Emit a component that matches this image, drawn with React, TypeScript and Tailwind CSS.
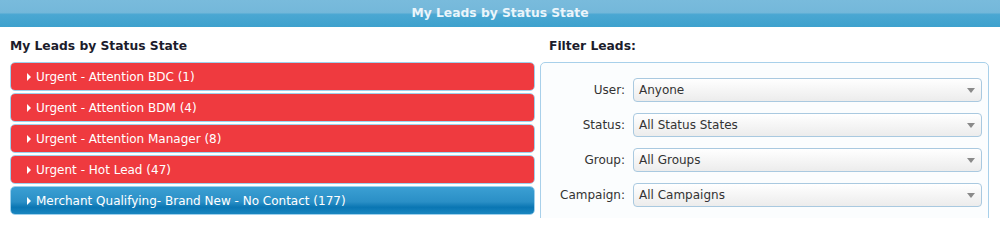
import { useState } from "react";

type Lead = { label: string; count: number; tone: "red" | "blue" };

const leads: Lead[] = [
  { label: "Urgent - Attention BDC", count: 1, tone: "red" },
  { label: "Urgent - Attention BDM", count: 4, tone: "red" },
  { label: "Urgent - Attention Manager", count: 8, tone: "red" },
  { label: "Urgent - Hot Lead", count: 47, tone: "red" },
  { label: "Merchant Qualifying- Brand New - No Contact", count: 177, tone: "blue" },
];

const filters = [
  { label: "User:", value: "Anyone" },
  { label: "Status:", value: "All Status States" },
  { label: "Group:", value: "All Groups" },
  { label: "Campaign:", value: "All Campaigns" },
];

function LeadRow({ lead }: { lead: Lead }) {
  const tone =
    lead.tone === "red"
      ? "bg-[#ef3a3f]"
      : "bg-[linear-gradient(#3b9fd3_0%,#2a8fc6_55%,#0a76b3_75%,#1a86c0_100%)]";
  return (
    <div className="rounded-[5px] border border-[#9fd0ec]">
      <button
        className={`flex h-[27px] w-full items-center gap-[5px] rounded-[4px] pl-[16px] text-left text-[12px] text-white ${tone}`}
      >
        <span className="h-0 w-0 border-y-[4px] border-l-[4px] border-y-transparent border-l-white" />
        <span>
          {lead.label} ({lead.count})
        </span>
      </button>
    </div>
  );
}

export default function App() {
  const [values] = useState(filters);

  return (
    <div className="h-[218px] w-[1000px] overflow-hidden bg-white font-['DejaVu_Sans',Verdana,sans-serif]">
      <div className="flex h-[27px] items-center justify-center bg-[linear-gradient(#79bbdc_0%,#74b8da_46%,#4aa7d2_54%,#3ea1cd_100%)]">
        <h1 className="text-[12.3px] font-bold text-[#eaf5fb]">My Leads by Status State</h1>
      </div>

      <div className="flex gap-[5px] px-[10px]">
        <section className="w-[525px] shrink-0">
          <h2 className="mt-[10px] mb-[6px] text-[12.3px] leading-[19px] font-bold text-[#1c1c2c]">
            My Leads by Status State
          </h2>
          <div className="flex flex-col gap-[2px]">
            {leads.map((l) => (
              <LeadRow key={l.label} lead={l} />
            ))}
          </div>
        </section>

        <section className="flex-1">
          <h2 className="mt-[10px] mb-[6px] pl-[9px] text-[12.3px] leading-[19px] font-bold text-[#1c1c2c]">
            Filter Leads:
          </h2>
          <div className="h-[200px] w-[449px] rounded-[5px] border border-[#a8d0ea] bg-[#fbfdfe] pt-[15px] pr-[6px]">
            <div className="flex flex-col gap-[11px]">
              {values.map((f) => (
                <div key={f.label} className="flex items-center gap-[8px]">
                  <label className="w-[84px] text-right text-[12px] text-[#333]">{f.label}</label>
                  <div className="flex h-[24px] flex-1 items-center justify-between rounded-[4px] border border-[#a9c9e0] bg-[linear-gradient(#ffffff,#ececec)] pl-[5px] pr-[6px] text-[12px] text-[#333]">
                    <span>{f.value}</span>
                    <span className="h-0 w-0 border-x-[4px] border-t-[5px] border-x-transparent border-t-[#8a8a8a]" />
                  </div>
                </div>
              ))}
            </div>
          </div>
        </section>
      </div>
    </div>
  );
}
